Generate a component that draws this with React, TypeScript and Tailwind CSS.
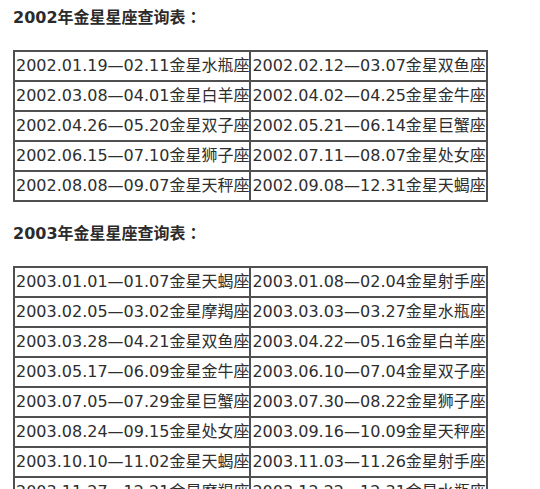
const T2002: [string, string][] = [
  ['2002.01.19—02.11金星水瓶座', '2002.02.12—03.07金星双鱼座'],
  ['2002.03.08—04.01金星白羊座', '2002.04.02—04.25金星金牛座'],
  ['2002.04.26—05.20金星双子座', '2002.05.21—06.14金星巨蟹座'],
  ['2002.06.15—07.10金星狮子座', '2002.07.11—08.07金星处女座'],
  ['2002.08.08—09.07金星天秤座', '2002.09.08—12.31金星天蝎座'],
];

const T2003: [string, string][] = [
  ['2003.01.01—01.07金星天蝎座', '2003.01.08—02.04金星射手座'],
  ['2003.02.05—03.02金星摩羯座', '2003.03.03—03.27金星水瓶座'],
  ['2003.03.28—04.21金星双鱼座', '2003.04.22—05.16金星白羊座'],
  ['2003.05.17—06.09金星金牛座', '2003.06.10—07.04金星双子座'],
  ['2003.07.05—07.29金星巨蟹座', '2003.07.30—08.22金星狮子座'],
  ['2003.08.24—09.15金星处女座', '2003.09.16—10.09金星天秤座'],
  ['2003.10.10—11.02金星天蝎座', '2003.11.03—11.26金星射手座'],
  ['2003.11.27—12.21金星摩羯座', '2003.12.22—12.31金星水瓶座'],
];

function Heading({ year }: { year: string }) {
  return (
    <h2 className="h-[24px] text-[16px] font-bold leading-[24px] text-[#2b2b2b] whitespace-nowrap">
      {year}年金星星座查询表
      <span className="leading-[0]" style={{ fontFamily: '"Noto Sans CJK TC", sans-serif' }}>
        ：
      </span>
    </h2>
  );
}

function Table({ rows }: { rows: [string, string][] }) {
  return (
    <table className="border-collapse border-2 border-[#505050]">
      <tbody>
        {rows.map((r) => (
          <tr key={r[0]}>
            {r.map((c) => (
              <td
                key={c}
                className="w-[236px] h-[28px] p-0 pl-px border-2 border-[#505050] whitespace-nowrap text-[16px] leading-[28px] text-[#2e2e2e]"
              >
                {c}
              </td>
            ))}
          </tr>
        ))}
      </tbody>
    </table>
  );
}

export default function App() {
  return (
    <div
      className="bg-white min-h-screen pl-[13px] pt-[6px] flex flex-col items-start"
      style={{ fontFamily: '"DejaVu Sans", "Noto Sans CJK SC", sans-serif' }}
    >
      <Heading year="2002" />
      <div className="mt-[20px]">
        <Table rows={T2002} />
      </div>
      <div className="mt-[20px]">
        <Heading year="2003" />
      </div>
      <div className="mt-[20px]">
        <Table rows={T2003} />
      </div>
    </div>
  );
}
